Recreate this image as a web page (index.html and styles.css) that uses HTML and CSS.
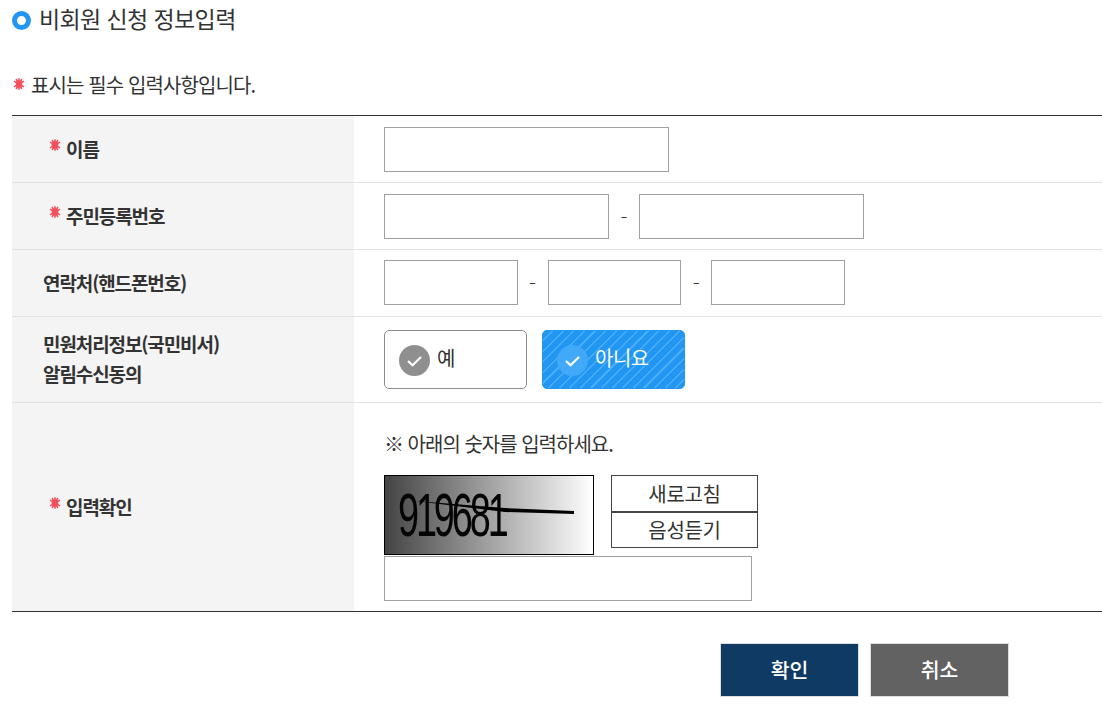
FILE: index.html
```html
<!DOCTYPE html>
<html lang="ko">
<head>
    <meta charset="UTF-8">
    <title>비회원 신청 정보입력</title>
    <link rel="stylesheet" href="styles.css">
</head>
<body>
    <svg class="defs" width="0" height="0">
        <symbol id="star" viewBox="0 0 12 12">
            <path d="M6 .2v11.6M1 3.1l10 5.8M11 3.1L1 8.9M3.1 1l5.8 10M8.9 1L3.1 11" stroke="#f0505e" stroke-width="1.6" fill="none"/>
            <circle cx="6" cy="6" r="3.4" fill="#f0505e"/>
        </symbol>
        <symbol id="check" viewBox="0 0 31 31">
            <path d="M9 16l4.5 4.2L22 12" stroke="#fff" stroke-width="2.2" fill="none"/>
        </symbol>
    </svg>

    <div id="container">
        <h2 class="title"><span class="title-dot"></span>비회원 신청 정보입력</h2>
        <p class="notice"><svg class="star"><use href="#star"/></svg>표시는 필수 입력사항입니다.</p>

        <table class="form-table">
            <tr class="row-name">
                <th><svg class="star"><use href="#star"/></svg>이름</th>
                <td><input type="text" class="field field-name"></td>
            </tr>
            <tr class="row-id">
                <th><svg class="star"><use href="#star"/></svg>주민등록번호</th>
                <td>
                    <div class="field-group">
                        <input type="text" class="field field-id">
                        <span class="dash">-</span>
                        <input type="text" class="field field-id">
                    </div>
                </td>
            </tr>
            <tr class="row-phone">
                <th class="plain">연락처(핸드폰번호)</th>
                <td>
                    <div class="field-group">
                        <input type="text" class="field field-phone">
                        <span class="dash">-</span>
                        <input type="text" class="field field-phone">
                        <span class="dash">-</span>
                        <input type="text" class="field field-phone">
                    </div>
                </td>
            </tr>
            <tr class="row-agree">
                <th class="plain">민원처리정보(국민비서)<br>알림수신동의</th>
                <td>
                    <div class="choices">
                        <div class="choice">
                            <svg class="choice-icon"><use href="#check"/></svg>
                            <span>예</span>
                        </div>
                        <div class="choice selected">
                            <svg class="choice-icon"><use href="#check"/></svg>
                            <span>아니요</span>
                        </div>
                    </div>
                </td>
            </tr>
            <tr class="row-captcha">
                <th><svg class="star"><use href="#star"/></svg>입력확인</th>
                <td>
                    <p class="captcha-note">※ 아래의 숫자를 입력하세요.</p>
                    <div class="captcha">
                        <svg class="captcha-img" viewBox="0 0 208 78">
                            <text transform="translate(13 60) scale(0.62 1)" class="captcha-digits">919681</text>
                            <path d="M30 25L120 32L189 35V38L120 36Z" fill="#000"/>
                        </svg>
                        <div class="captcha-btns">
                            <button type="button">새로고침</button>
                            <button type="button">음성듣기</button>
                        </div>
                    </div>
                    <input type="text" class="field field-captcha">
                </td>
            </tr>
        </table>

        <div class="actions">
            <button type="button" class="btn btn-ok">확인</button>
            <button type="button" class="btn btn-cancel">취소</button>
        </div>
    </div>
</body>
</html>
```

FILE: styles.css
```css
* {
    box-sizing: border-box;
}
body {
    margin: 0;
    font-family: "Noto Sans CJK KR", "Noto Sans", sans-serif;
    color: #333333;
    background-color: #ffffff;
}
.defs {
    display: block;
    height: 0;
}
#container {
    padding-left: 12px;
}
.title {
    display: flex;
    align-items: center;
    height: 36px;
    margin: 0;
    font-size: 23px;
    font-weight: 400;
    letter-spacing: -0.6px;
}
.title-dot {
    width: 19px;
    height: 19px;
    margin: 4px 8px 0 0;
    border: 5px solid #2196f3;
    border-radius: 50%;
}
.notice {
    display: flex;
    align-items: center;
    height: 30px;
    margin: 33px 0 16px;
    font-size: 20px;
    letter-spacing: -0.9px;
}
.notice .star {
    margin: 0 6px 0 1px;
}
.star {
    width: 12px;
    height: 12px;
    margin-right: 5px;
    flex-shrink: 0;
}
.form-table {
    width: 1090px;
    border-collapse: collapse;
    border-top: 1px solid #333333;
    border-bottom: 1px solid #333333;
}
.form-table tr + tr {
    border-top: 1px solid #e2e2e2;
}
.form-table th {
    width: 342px;
    padding: 0 0 0 37px;
    background-color: #f4f4f4;
    font-size: 19px;
    font-weight: 700;
    line-height: 30px;
    letter-spacing: -1.1px;
    text-align: left;
}
.form-table th.plain {
    padding-left: 31px;
}
.form-table th .star {
    vertical-align: 6px;
}
.form-table td {
    padding: 0 0 0 30px;
}
.row-name {
    height: 67px;
}
.row-id {
    height: 67px;
}
.row-phone {
    height: 67px;
}
.row-phone td {
    padding-bottom: 2px;
}
.row-agree {
    height: 86px;
}
.form-table .row-agree th {
    padding-bottom: 2px;
}
.row-captcha {
    height: 209px;
}
.field {
    display: block;
    height: 45px;
    border: 1px solid #a0a0a0;
    background-color: #ffffff;
}
.field-name {
    width: 285px;
}
.field-id {
    width: 225px;
}
.field-phone {
    width: 133.6px;
}
.field-group {
    display: flex;
    align-items: center;
}
.dash {
    width: 30px;
    font-size: 21px;
    font-weight: 300;
    text-align: center;
}
.choices {
    display: flex;
    gap: 15px;
}
.choice {
    display: flex;
    align-items: center;
    width: 143px;
    height: 59px;
    padding: 2px 0 0 14px;
    border: 1px solid #8c8c8c;
    border-radius: 5px;
    font-size: 20px;
    letter-spacing: -0.5px;
}
.choice span {
    margin: -6px 0 0 7px;
}
.choice-icon {
    width: 31px;
    height: 31px;
    border-radius: 50%;
    background-color: #8f8f8f;
}
.choice.selected {
    border-color: #2196f3;
    color: #ffffff;
    background: repeating-linear-gradient(135deg, #2196f3 0 6px, #4aaef7 6px 7.5px);
}
.choice.selected .choice-icon {
    background-color: #42a8f8;
}
.captcha-note {
    margin: 0 0 17px;
    padding-top: 26px;
    font-size: 20px;
    line-height: 28px;
    letter-spacing: -1px;
}
.captcha {
    display: flex;
    align-items: flex-start;
    gap: 17px;
}
.captcha-img {
    display: block;
    width: 210px;
    height: 80px;
    border: 1px solid #000000;
    background: linear-gradient(90deg, #444444, #ffffff);
}
.captcha-digits {
    font-family: "Liberation Sans", sans-serif;
    font-size: 61px;
    letter-spacing: -5px;
    fill: #050505;
}
.captcha-btns {
    display: flex;
    flex-direction: column;
    width: 147px;
}
.captcha-btns button {
    height: 37px;
    padding: 0;
    border: 1px solid #444444;
    background-color: #ffffff;
    font-family: inherit;
    font-size: 20px;
    letter-spacing: -0.3px;
    color: #333333;
}
.captcha-btns button + button {
    height: 36px;
}
.field-captcha {
    width: 368px;
    margin-top: 1px;
    margin-bottom: 10px;
}
.actions {
    display: flex;
    gap: 11px;
    margin: 31px 0 0 708px;
}
.btn {
    width: 139px;
    height: 54px;
    padding: 0 0 2px;
    border: 1px solid #dddddd;
    font-family: inherit;
    font-size: 20.5px;
    font-weight: 500;
    color: #ffffff;
}
.btn-ok {
    background-color: #0f3a63;
}
.btn-cancel {
    background-color: #626262;
}
```
